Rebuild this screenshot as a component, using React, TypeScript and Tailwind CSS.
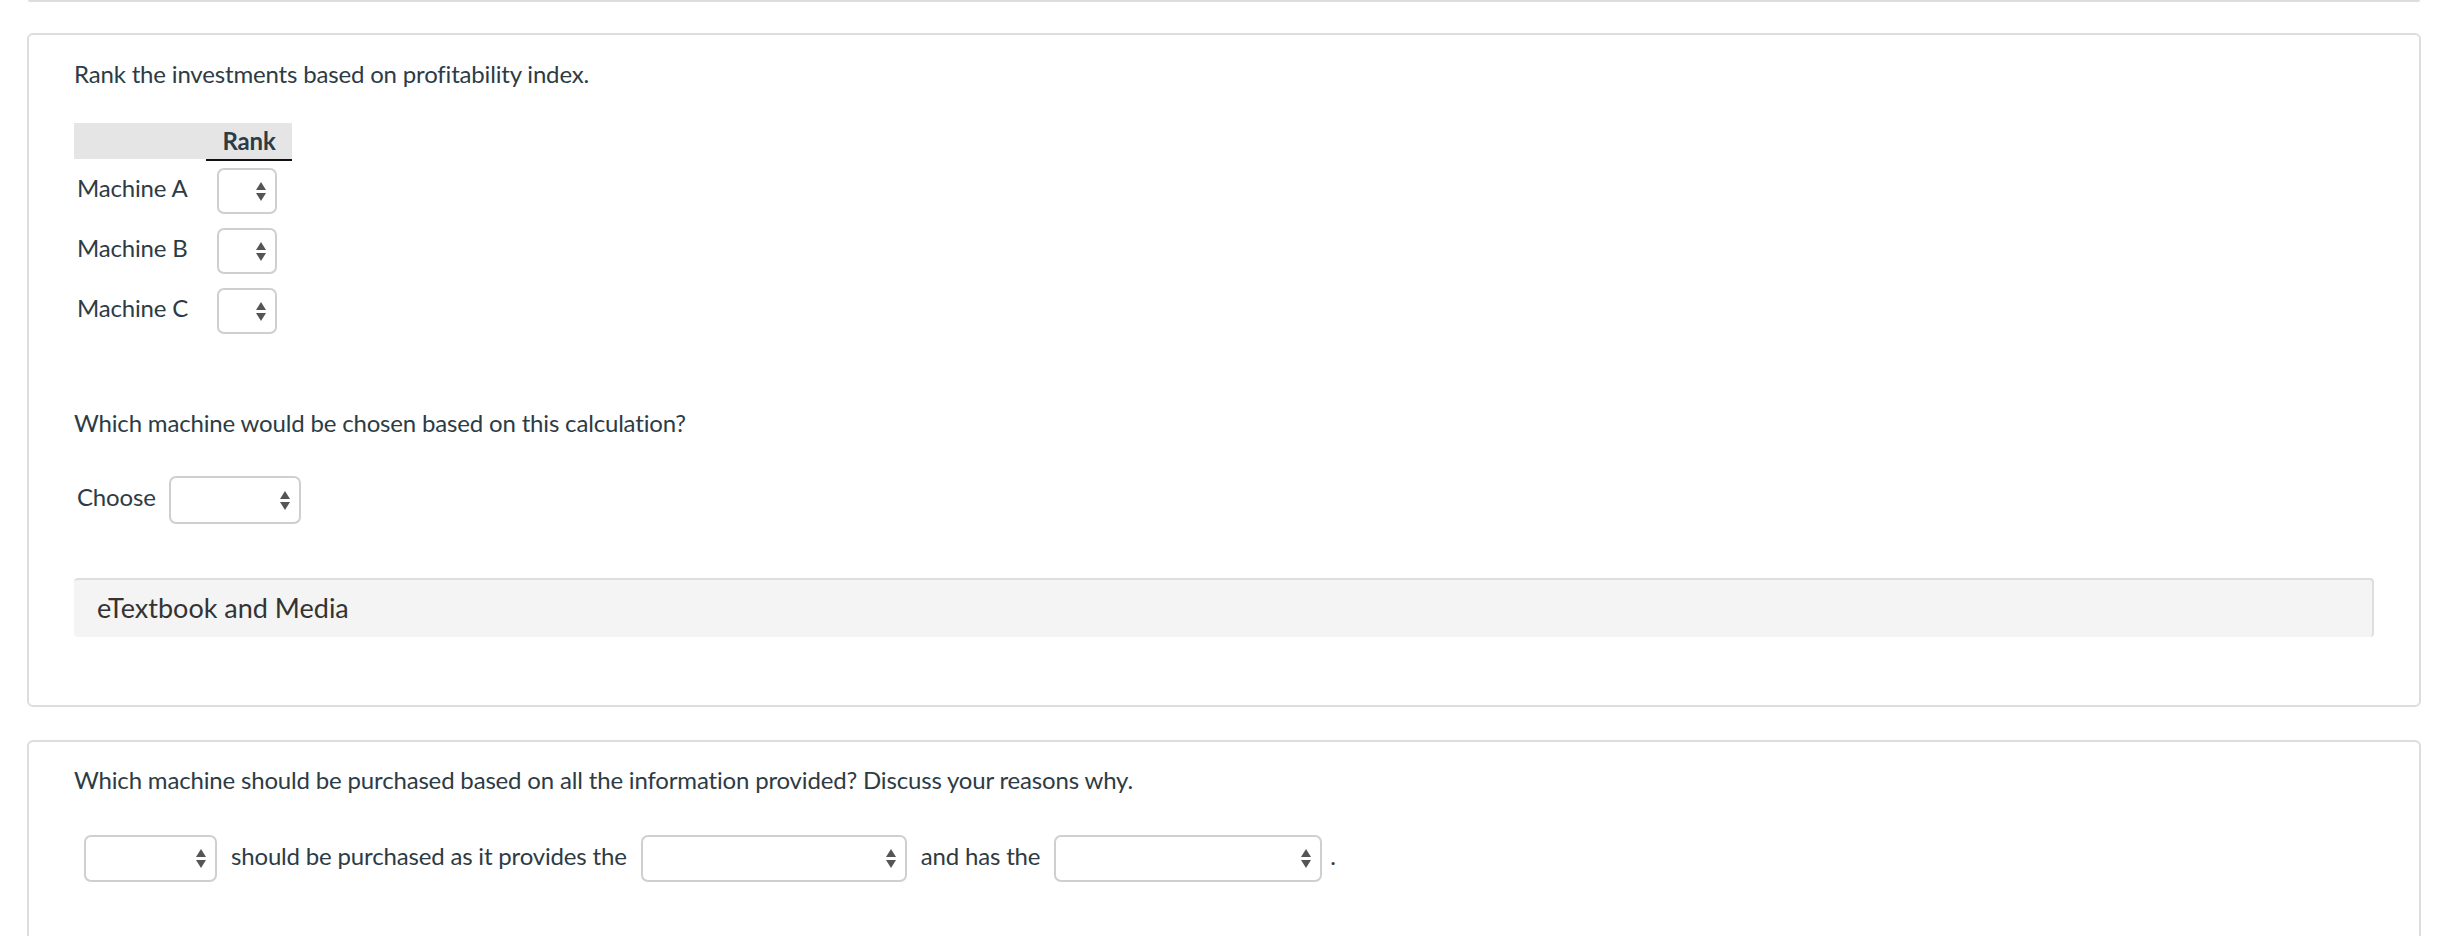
import React from 'react';

const Arrows = () => (
    <svg width="10" height="19" viewBox="0 0 10 19" className="shrink-0">
        <polygon points="5,0 10,8 0,8" fill="#555" />
        <polygon points="0,11 10,11 5,19" fill="#555" />
    </svg>
);

const SelectBox = ({ w, h }: { w: string; h: string }) => {
    return (
        <div
            className={`${w} ${h} shrink-0 flex items-center justify-end pr-[9px] bg-white border-2 border-[#cfcfcf] rounded-[7px]`}
        >
            <Arrows />
        </div>
    );
};

const machines = ['Machine A', 'Machine B', 'Machine C'];

const App = () => {
    return (
        <div className="min-h-screen bg-white pl-[27px] pr-[30px] [font-family:Lato,'Liberation_Sans',sans-serif] text-[#2d3b45] tracking-[-0.17px]">
            {/* bottom edge of the previous card */}
            <div className="mx-px h-[2px] bg-[#dddddd] rounded-b-[4px]"></div>

            {/* Card 1 */}
            <div className="mt-[31px] rounded-[6px] border-2 border-[#dddddd] px-[45px] pt-[21px] pb-[68px]">
                <p className="text-[24px] leading-[36px]">Rank the investments based on profitability index.</p>

                <div className="mt-[31px]">
                    <div className="flex">
                        <div className="w-[132px] h-[36px] bg-[#e5e5e5]"></div>
                        <div className="w-[86px]">
                            <div className="h-[36px] bg-[#e5e5e5] text-center text-[24px] leading-[36px] font-bold">
                                Rank
                            </div>
                            <div className="h-[2px] bg-[#111]"></div>
                        </div>
                    </div>

                    {machines.map((m) => (
                        <div key={m} className="flex items-center h-[60px]">
                            <div className="w-[132px] pl-[3px] pb-[6px] text-[24px] leading-[36px]">{m}</div>
                            <div className="w-[86px] pl-[11px]">
                                <SelectBox w="w-[60px]" h="h-[46px]" />
                            </div>
                        </div>
                    ))}
                </div>

                <p className="mt-[64px] text-[24px] leading-[36px]">Which machine would be chosen based on this calculation?</p>

                <div className="mt-[35px] flex items-center gap-[13px] pl-[3px]">
                    <span className="pb-[6px] text-[24px] leading-[36px]">Choose</span>
                    <SelectBox w="w-[132px]" h="h-[48px]" />
                </div>

                <div className="mt-[54px] h-[59px] flex items-center pl-[23px] pb-[2px] bg-[#f4f4f4] border-t-2 border-r-2 border-[#dedede] rounded-[4px] tracking-normal">
                    <span className="text-[27px] leading-[36px] text-[#333]">eTextbook and Media</span>
                </div>
            </div>

            {/* Card 2 */}
            <div className="mt-[33px] rounded-[6px] border-2 border-[#dddddd] px-[45px] pt-[20px] pb-[80px]">
                <p className="text-[24px] leading-[36px]">
                    Which machine should be purchased based on all the information provided? Discuss your reasons why.
                </p>

                <div className="mt-[37px] pl-[10px] flex items-center gap-[14px] text-[24px] leading-[36px]">
                    <SelectBox w="w-[133px]" h="h-[47px]" />
                    <span className="pb-[6px]">should be purchased as it provides the</span>
                    <SelectBox w="w-[266px]" h="h-[47px]" />
                    <span className="pb-[6px]">and has the</span>
                    <div className="flex items-center gap-[8px]">
                        <SelectBox w="w-[268px]" h="h-[47px]" />
                        <span className="pb-[6px]">.</span>
                    </div>
                </div>
            </div>
        </div>
    );
};

export default App;
